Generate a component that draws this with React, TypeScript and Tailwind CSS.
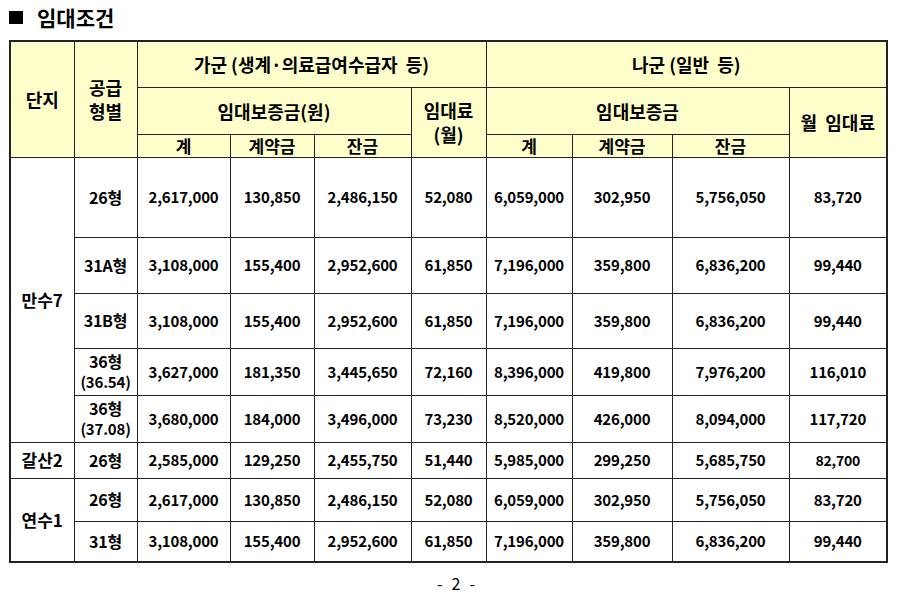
import React from "react";

type Row = {
  danji?: string;
  span?: number;
  type: React.ReactNode;
  vals: string[];
  h: number;
  smallLast?: boolean;
};

const rows: Row[] = [
  {
    danji: "만수7",
    span: 5,
    type: "26형",
    vals: ["2,617,000", "130,850", "2,486,150", "52,080", "6,059,000", "302,950", "5,756,050", "83,720"],
    h: 80,
  },
  {
    type: "31A형",
    vals: ["3,108,000", "155,400", "2,952,600", "61,850", "7,196,000", "359,800", "6,836,200", "99,440"],
    h: 56,
  },
  {
    type: "31B형",
    vals: ["3,108,000", "155,400", "2,952,600", "61,850", "7,196,000", "359,800", "6,836,200", "99,440"],
    h: 55,
  },
  {
    type: (
      <div className="flex flex-col items-center leading-[21px]">
        <span>36형</span>
        <span className="text-[15px] leading-[20px]">(36.54)</span>
      </div>
    ),
    vals: ["3,627,000", "181,350", "3,445,650", "72,160", "8,396,000", "419,800", "7,976,200", "116,010"],
    h: 47,
  },
  {
    type: (
      <div className="flex flex-col items-center leading-[21px]">
        <span>36형</span>
        <span className="text-[15px] leading-[20px]">(37.08)</span>
      </div>
    ),
    vals: ["3,680,000", "184,000", "3,496,000", "73,230", "8,520,000", "426,000", "8,094,000", "117,720"],
    h: 47,
  },
  {
    danji: "갈산2",
    span: 1,
    type: "26형",
    vals: ["2,585,000", "129,250", "2,455,750", "51,440", "5,985,000", "299,250", "5,685,750", "82,700"],
    h: 36,
    smallLast: true,
  },
  {
    danji: "연수1",
    span: 2,
    type: "26형",
    vals: ["2,617,000", "130,850", "2,486,150", "52,080", "6,059,000", "302,950", "5,756,050", "83,720"],
    h: 43,
  },
  {
    type: "31형",
    vals: ["3,108,000", "155,400", "2,952,600", "61,850", "7,196,000", "359,800", "6,836,200", "99,440"],
    h: 41,
  },
];

const colWidths = [64, 63, 93, 84, 97, 75, 86, 100, 117, 98];

const th = "border border-[#222] bg-[#ffffcc] text-center align-middle p-0 font-bold";
const td = "border border-[#222] text-center align-middle p-0 font-bold";

export default function App() {
  return (
    <div
      className="w-[898px] h-[602px] bg-white text-black overflow-hidden"
      style={{ fontFamily: '"Noto Sans CJK KR", "Noto Sans", sans-serif' }}
    >
      {/* Title */}
      <div className="h-[34px] flex items-center pl-[9px] gap-[14px]">
        <div className="w-[14px] h-[13px] bg-black" />
        <span className="text-[21px] font-bold leading-none">임대조건</span>
      </div>

      {/* Table */}
      <div className="pl-[9px] mt-[6px]">
        <table className="table-fixed border-collapse border-2 border-[#222] w-[877px] text-[15px] leading-[20px] tracking-[-0.2px]">
          <colgroup>
            {colWidths.map((w, i) => (
              <col key={i} style={{ width: w }} />
            ))}
          </colgroup>
          <thead className="text-[18px] leading-[24px] tracking-normal">
            <tr className="h-[46px]">
              <th rowSpan={3} className={th}>
                단지
              </th>
              <th rowSpan={3} className={th}>
                공급
                <br />
                형별
              </th>
              <th colSpan={4} className={th}>
                가군 (생계·의료급여수급자&nbsp; 등)
              </th>
              <th colSpan={4} className={th}>
                나군 (일반&nbsp; 등)
              </th>
            </tr>
            <tr className="h-[47px]">
              <th colSpan={3} className={th}>
                임대보증금(원)
              </th>
              <th rowSpan={2} className={th}>
                임대료
                <br />
                (월)
              </th>
              <th colSpan={3} className={th}>
                임대보증금
              </th>
              <th rowSpan={2} className={th}>
                월&nbsp; 임대료
              </th>
            </tr>
            <tr className="h-[23px] text-[17px] leading-[20px]">
              <th className={th}>계</th>
              <th className={th}>계약금</th>
              <th className={th}>잔금</th>
              <th className={th}>계</th>
              <th className={th}>계약금</th>
              <th className={th}>잔금</th>
            </tr>
          </thead>
          <tbody>
            {rows.map((r, i) => (
              <tr key={i} style={{ height: r.h }}>
                {r.danji && (
                  <td rowSpan={r.span} className={`${td} text-[17px] tracking-normal`}>
                    {r.danji}
                  </td>
                )}
                <td className={`${td} text-[16px] leading-[21px]`}>{r.type}</td>
                {r.vals.map((v, j) => (
                  <td
                    key={j}
                    className={`${td} ${r.smallLast && j === 7 ? "text-[14px]" : ""}`}
                  >
                    {v}
                  </td>
                ))}
              </tr>
            ))}
          </tbody>
        </table>
      </div>

      {/* Page number */}
      <div className="mt-[10px] flex justify-center gap-[9px] pl-[14px] text-[16px] leading-[20px]">
        <span>-</span>
        <span>2</span>
        <span>-</span>
      </div>
    </div>
  );
}
